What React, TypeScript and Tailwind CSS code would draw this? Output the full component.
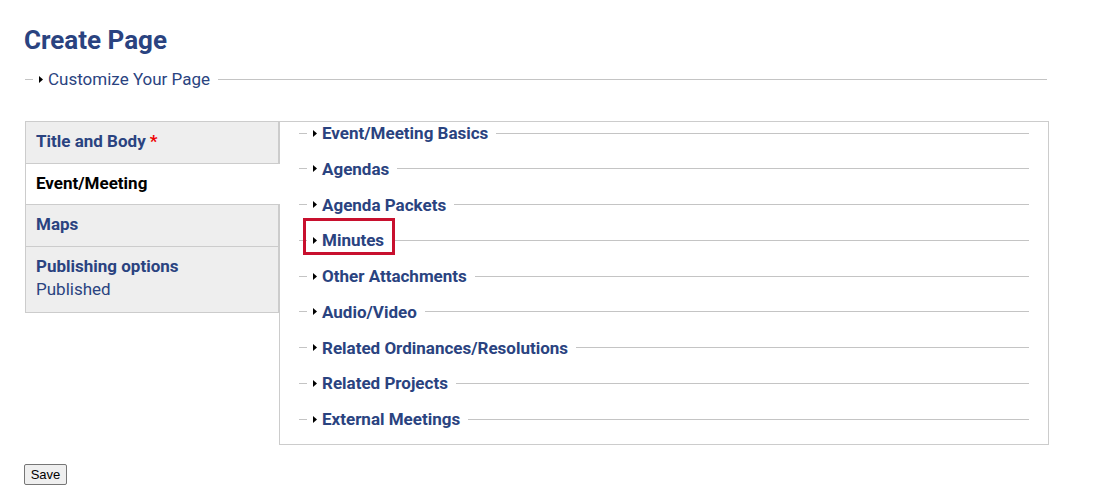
import React from 'react';

const sections = [
  'Event/Meeting Basics',
  'Agendas',
  'Agenda Packets',
  'Minutes',
  'Other Attachments',
  'Audio/Video',
  'Related Ordinances/Resolutions',
  'Related Projects',
  'External Meetings',
];

const Caret = () => (
  <svg width="4" height="7" viewBox="0 0 4 7" className="shrink-0">
    <path d="M0 0 L4 3.5 L0 7 Z" fill="#000" />
  </svg>
);

const LegendRow: React.FC<{ label: string; bold?: boolean; highlight?: boolean }> = ({ label, bold, highlight }) => (
  <div className="relative flex h-[22px] items-center">
    <div className="h-px w-[8px] bg-[#c4c4c4]" />
    <div className="ml-[6px] mr-[5px]">
      <Caret />
    </div>
    <span className={`whitespace-nowrap text-[17px] leading-[22px] text-[#2a4380] ${bold ? 'font-bold' : ''}`}>{label}</span>
    <div className="ml-[8px] h-px flex-1 bg-[#c4c4c4]" />
    {highlight && (
      <div className="absolute left-[4px] top-[-11px] h-[37px] w-[92px] border-[3px] border-[#c8102e]" />
    )}
  </div>
);

const App: React.FC = () => {
  const tabs = [
    { label: 'Title and Body', required: true, pad: 'pb-[10px]' },
    { label: 'Event/Meeting', active: true, pad: 'pb-[9px]' },
    { label: 'Maps', pad: 'pb-[10px]' },
    { label: 'Publishing options', sub: 'Published', pad: 'pb-[11px]' },
  ];

  return (
    <div className="min-h-[502px] bg-white pl-[24px] pt-[23px] font-['Roboto',sans-serif]">
      {/* Header */}
      <h1 className="text-[26px] font-bold leading-[34px] text-[#2a4380]">Create Page</h1>

      {/* Customize fieldset */}
      <div className="mt-[11px] w-[1023px] pl-[1px]">
        <LegendRow label="Customize Your Page" />
      </div>

      {/* Vertical tabs */}
      <div className="mt-[31px] flex items-start pl-[1px]">
        <ul className="w-[254px] border-l border-t border-[#ccc]">
          {tabs.map((tab) => (
            <li
              key={tab.label}
              className={`border-b border-[#ccc] px-[10px] pt-[8px] ${tab.pad} leading-[23px] text-[17px] ${
                tab.active ? 'relative z-10 -mr-px bg-white' : 'border-r bg-[#eee]'
              }`}
            >
              <div className={`font-bold ${tab.active ? 'text-black' : 'text-[#2a4380]'}`}>
                {tab.label}
                {tab.required && <span className="ml-[4px] text-[#e00]">*</span>}
              </div>
              {tab.sub && <div className="text-[#2a4380]">{tab.sub}</div>}
            </li>
          ))}
        </ul>

        <div className="w-[770px] border border-[#ccc] pb-[14px] pl-[19px] pr-[19px]">
          <div className="flex flex-col gap-[13.75px]">
            {sections.map((s) => (
              <LegendRow key={s} label={s} bold highlight={s === 'Minutes'} />
            ))}
          </div>
        </div>
      </div>

      {/* Save */}
      <button className="mt-[19px] h-[21px] w-[43px] rounded-[2px] border border-[#767676] bg-[#efefef] font-['Liberation_Sans',sans-serif] text-[13px] leading-none text-black">
        Save
      </button>
    </div>
  );
};

export default App;
